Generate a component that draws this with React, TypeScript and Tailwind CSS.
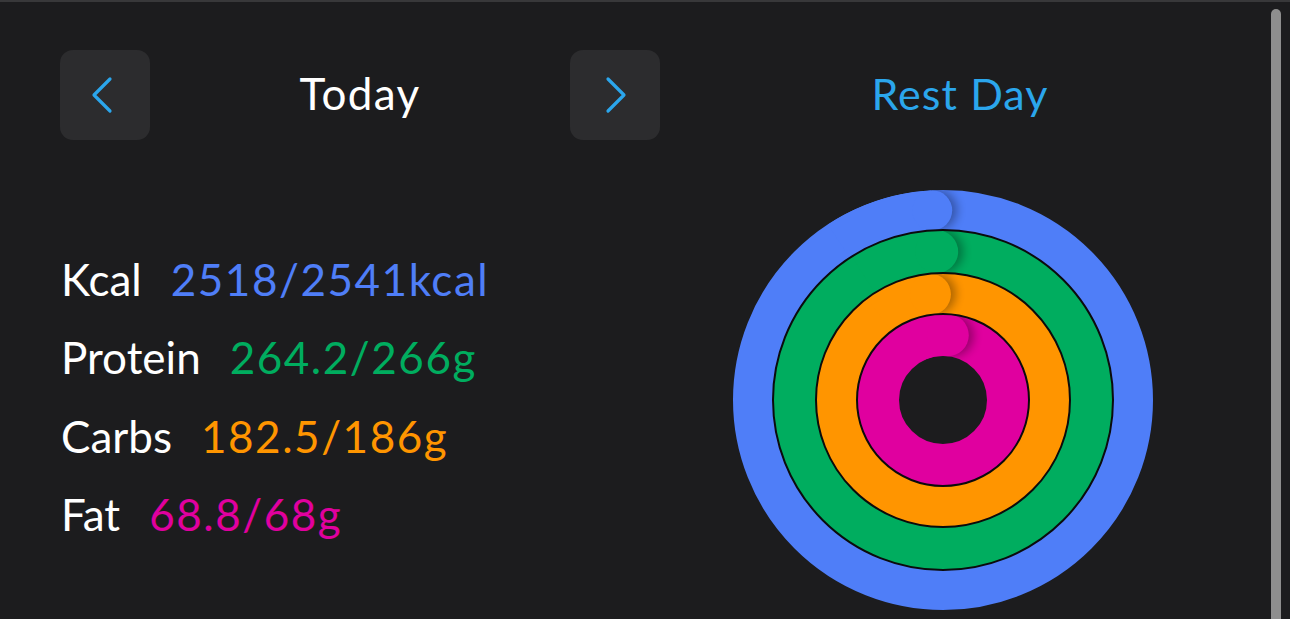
import React from "react";

interface Macro {
  label: string;
  value: number;
  goal: number;
  unit: string;
  color: string;
  textClass: string;
  radius: number;
  width: number;
}

const macros: Macro[] = [
  { label: "Kcal", value: 2518, goal: 2541, unit: "kcal", color: "#4f7ef8", textClass: "text-[#4f7ef8]", radius: 190, width: 40 },
  { label: "Protein", value: 264.2, goal: 266, unit: "g", color: "#00ad5f", textClass: "text-[#00ad5f]", radius: 148.5, width: 43 },
  { label: "Carbs", value: 182.5, goal: 186, unit: "g", color: "#ff9500", textClass: "text-[#ff9500]", radius: 106.5, width: 41 },
  { label: "Fat", value: 68.8, goal: 68, unit: "g", color: "#e0009f", textClass: "text-[#e0009f]", radius: 65, width: 42 },
];

const C = 210;

// point on a circle, angle in degrees clockwise from 12 o'clock
const pt = (r: number, deg: number) => {
  const a = (deg * Math.PI) / 180;
  return { x: C + r * Math.sin(a), y: C - r * Math.cos(a) };
};

const Ring: React.FC<{ m: Macro; idx: number }> = ({ m, idx }) => {
  const end = (m.value / m.goal) * 360;
  const tip = pt(m.radius, end);
  const from = pt(m.radius, end - 30);
  const rad = (end * Math.PI) / 180;
  const outer = m.radius + m.width / 2;
  const inner = m.radius - m.width / 2;
  const clip = `M ${C - outer} ${C} a ${outer} ${outer} 0 1 0 ${outer * 2} 0 a ${outer} ${outer} 0 1 0 ${-outer * 2} 0 Z M ${C - inner} ${C} a ${inner} ${inner} 0 1 0 ${inner * 2} 0 a ${inner} ${inner} 0 1 0 ${-inner * 2} 0 Z`;

  return (
    <g>
      <defs>
        <clipPath id={`ring-clip-${idx}`}>
          <path d={clip} clipRule="evenodd" />
        </clipPath>
      </defs>
      <circle cx={C} cy={C} r={m.radius} fill="none" stroke={m.color} strokeWidth={m.width} />
      <g clipPath={`url(#ring-clip-${idx})`}>
        <circle
          cx={tip.x + Math.cos(rad) * 5}
          cy={tip.y + Math.sin(rad) * 5}
          r={m.width / 2}
          fill="#000"
          opacity={0.32}
          filter="url(#cap-blur)"
        />
        <path
          d={`M ${from.x} ${from.y} A ${m.radius} ${m.radius} 0 0 1 ${tip.x} ${tip.y}`}
          fill="none"
          stroke={m.color}
          strokeWidth={m.width}
        />
        <circle cx={tip.x} cy={tip.y} r={m.width / 2} fill={m.color} />
      </g>
    </g>
  );
};

const Chevron: React.FC<{ dir: "left" | "right" }> = ({ dir }) => (
  <svg width="24" height="38" viewBox="0 0 24 38" fill="none">
    <path
      d={dir === "left" ? "M20 3 L4 19 L20 35" : "M4 3 L20 19 L4 35"}
      stroke="#2ba6ec"
      strokeWidth="3.2"
      strokeLinecap="round"
      strokeLinejoin="round"
    />
  </svg>
);

export default function App() {
  return (
    <div
      className="flex h-[619px] w-full overflow-hidden border-t-2 border-[#38383a] bg-[#1c1c1e] text-white"
      style={{ fontFamily: "Lato, 'Open Sans', sans-serif" }}
    >
      <div className="flex flex-1 flex-col pl-[60px] pr-[11px] pt-[48px]">
        {/* Header */}
        <div className="flex h-[90px] items-center">
          <button className="flex h-[90px] w-[90px] shrink-0 items-center justify-center rounded-[13px] bg-[#2c2c2e] pr-[6px]">
            <Chevron dir="left" />
          </button>
          <div className="w-[420px] pb-[4px] text-center text-[44px] leading-none tracking-[0.03em]">Today</div>
          <button className="flex h-[90px] w-[90px] shrink-0 items-center justify-center rounded-[13px] bg-[#2c2c2e] pl-[2px]">
            <Chevron dir="right" />
          </button>
          <div className="flex-1 pb-[4px] text-center text-[43px] leading-none tracking-[0.025em] text-[#2ba6ec]">Rest Day</div>
        </div>

        {/* Body */}
        <div className="mt-[50px] flex items-center">
          <div className="flex w-[673px] flex-col pb-[7px] pl-[1px]">
            {macros.map((m) => (
              <div key={m.label} className="flex h-[78.5px] items-center gap-[29px] text-[44px] leading-none">
                <span>{m.label}</span>
                <span className={`${m.textClass} tracking-[0.035em]`}>
                  {m.value}/{m.goal}
                  {m.unit}
                </span>
              </div>
            ))}
          </div>
          <svg width="420" height="420" viewBox="0 0 420 420">
            <defs>
              <filter id="cap-blur" x="-50%" y="-50%" width="200%" height="200%">
                <feGaussianBlur stdDeviation="5" />
              </filter>
            </defs>
            {macros.map((m, i) => (
              <Ring key={m.label} m={m} idx={i} />
            ))}
            {[170, 127, 86].map((r) => (
              <circle key={r} cx={C} cy={C} r={r} fill="none" stroke="#0b0b0c" strokeWidth="2" />
            ))}
          </svg>
        </div>
      </div>

      {/* Scroll thumb */}
      <div className="w-[19px] pt-[7px]">
        <div className="h-full w-[10px] rounded-t-full bg-[#8e8e8e]" />
      </div>
    </div>
  );
}
